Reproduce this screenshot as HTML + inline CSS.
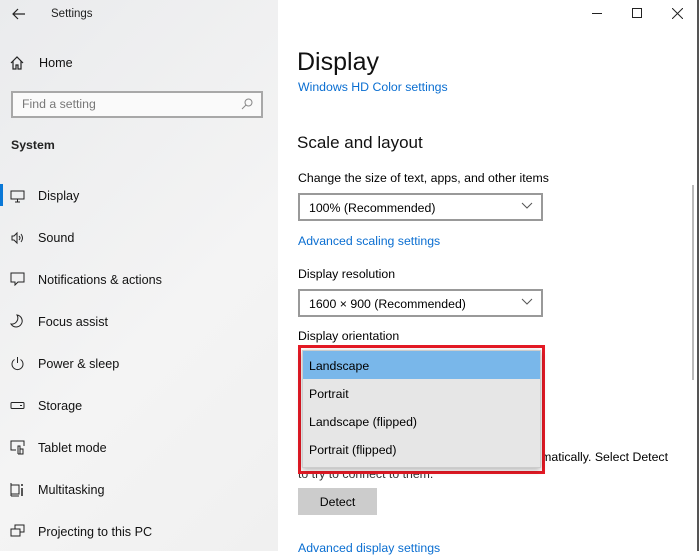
<!DOCTYPE html>
<html><head><meta charset="utf-8"><style>
*{margin:0;padding:0;box-sizing:border-box}
body{width:699px;height:551px;overflow:hidden;font-family:"Liberation Sans",sans-serif;background:#fff;position:relative;color:#000}
.a{position:absolute;white-space:nowrap}
#side{position:absolute;left:0;top:0;width:278px;height:551px;background:linear-gradient(135deg,#eaebed,#f4f4f4 60%,#f0f0f0)}
.nav{font-size:12.6px;color:#111}
.ic{position:absolute;left:10px}
.link{color:#0a6ed1;font-size:12.3px}
.dd{position:absolute;left:298px;width:245px;height:28px;border:2px solid #999;background:#fff;font-size:12.3px;padding:6px 0 0 9px}
.chev{position:absolute;right:8px;top:7px}
</style></head><body>
<div id="side">
<svg class="a" style="left:12px;top:8px" width="14" height="12"><path d="M6 1L1 6L6 11M1 6H13" stroke="#222" fill="none" stroke-width="1.2"/></svg>
<div class="a" style="left:51px;top:8px;font-size:11.5px;color:#222">Settings</div>
<svg class="ic" style="top:56px" width="14" height="14"><path d="M1 7L7 1L13 7M3 5V13H6V9H8V13H11V5" stroke="#222" fill="none" stroke-width="1.2"/></svg>
<div class="a nav" style="left:39px;top:56px">Home</div>
<div class="a" style="left:11px;top:91px;width:252px;height:27px;border:2px solid #a8a8a8;background:#fafafa;font-size:12.3px;color:#777;padding:4px 0 0 9px">Find a setting
<svg style="position:absolute;right:8px;top:5px" width="12" height="12"><circle cx="7.5" cy="4.5" r="3.5" stroke="#888" fill="none"/><path d="M5 7L1 11" stroke="#888"/></svg></div>
<div class="a" style="left:11px;top:138px;font-size:12.3px;font-weight:bold;color:#222">System</div>
<div class="a" style="left:0;top:184px;width:3px;height:22px;background:#0a78d7"></div>
<svg class="ic" style="top:190px" width="16" height="14"><rect x="1" y="1" width="13" height="8" stroke="#222" fill="none"/><path d="M5 12H10M7.5 9V12" stroke="#222"/></svg>
<div class="a nav" style="left:38px;top:189px">Display</div>
<svg class="ic" style="top:231px" width="16" height="14"><path d="M2 5H4L7 2V12L4 9H2Z M9 5Q11 7 9 9 M11 3Q14 7 11 11" stroke="#222" fill="none"/></svg>
<div class="a nav" style="left:38px;top:231px">Sound</div>
<svg class="ic" style="top:272px" width="16" height="14"><path d="M1 1H14V10H8L5 13V10H1Z" stroke="#222" fill="none"/></svg>
<div class="a nav" style="left:38px;top:273px">Notifications &amp; actions</div>
<svg class="ic" style="top:314px" width="16" height="16"><path d="M7 1A6 6 0 1 1 1 10A6 6 0 0 0 7 1Z" stroke="#222" fill="none"/></svg>
<div class="a nav" style="left:38px;top:315px">Focus assist</div>
<svg class="ic" style="top:356px" width="16" height="16"><path d="M4.5 3.5A5.5 5.5 0 1 0 10.5 3.5M7.5 1V7" stroke="#222" fill="none"/></svg>
<div class="a nav" style="left:38px;top:357px">Power &amp; sleep</div>
<svg class="ic" style="top:401px" width="16" height="10"><rect x="1" y="1.5" width="13" height="6" rx="1" stroke="#222" fill="none"/><path d="M10 4.5H12" stroke="#222"/></svg>
<div class="a nav" style="left:38px;top:399px">Storage</div>
<svg class="ic" style="top:440px" width="16" height="16"><path d="M6 10H1V1H14V6" stroke="#222" fill="none"/><path d="M8 14V6H10V14M10 9H13V14H8" stroke="#222" fill="none"/></svg>
<div class="a nav" style="left:38px;top:441px">Tablet mode</div>
<svg class="ic" style="top:482px" width="16" height="16"><path d="M1 1V14M1 3H9V12H1M1 14H9" stroke="#222" fill="none"/><path d="M12 2V4M12 6V14" stroke="#222" stroke-width="1.5"/></svg>
<div class="a nav" style="left:38px;top:483px">Multitasking</div>
<svg class="ic" style="top:524px" width="16" height="16"><path d="M5 5V1H14V8H10M1 5H10V12H1Z" stroke="#222" fill="none"/></svg>
<div class="a nav" style="left:38px;top:525px">Projecting to this PC</div>
</div>
<div class="a" style="left:592px;top:13px;width:10px;height:1px;background:#222"></div>
<div class="a" style="left:632px;top:8px;width:10px;height:10px;border:1px solid #222"></div>
<svg class="a" style="left:672px;top:8px" width="11" height="11"><path d="M0 0L11 11M11 0L0 11" stroke="#222"/></svg>
<div class="a" style="left:692px;top:185px;width:2px;height:195px;background:#bbb"></div>
<div class="a" style="left:697px;top:0;width:2px;height:551px;background:#555"></div>
<div class="a" style="left:297px;top:48px;font-size:25px;color:#111">Display</div>
<div class="a link" style="left:298px;top:80px">Windows HD Color settings</div>
<div class="a" style="left:297px;top:133px;font-size:17px;color:#111">Scale and layout</div>
<div class="a" style="left:298px;top:171px;font-size:12.3px">Change the size of text, apps, and other items</div>
<div class="dd" style="top:193px">100% (Recommended)<svg class="chev" width="12" height="8"><path d="M1 1L6 6L11 1" stroke="#555" fill="none"/></svg></div>
<div class="a link" style="left:298px;top:234px">Advanced scaling settings</div>
<div class="a" style="left:298px;top:267px;font-size:12.3px">Display resolution</div>
<div class="dd" style="top:289px">1600 × 900 (Recommended)<svg class="chev" width="12" height="8"><path d="M1 1L6 6L11 1" stroke="#555" fill="none"/></svg></div>
<div class="a" style="left:298px;top:329px;font-size:12.3px">Display orientation</div>
<div class="a" style="left:298px;top:450px;font-size:12.3px;width:380px;text-align:right;padding-right:10px">matically. Select Detect</div>
<div class="a" style="left:298px;top:467px;font-size:12.3px;color:#333">to try to connect to them.</div>
<div class="a" style="left:298px;top:488px;width:79px;height:27px;background:#ccc;font-size:12.3px;text-align:center;padding-top:7px">Detect</div>
<div class="a link" style="left:298px;top:541px">Advanced display settings</div>
<div class="a" style="left:298px;top:345px;width:247px;height:129px;border:3px solid #e51a25;background:#fff"></div>
<div class="a" style="left:302px;top:350px;width:239px;height:118px;background:#e6e6e6;border:1px solid #ccc;box-shadow:0 2px 6px rgba(0,0,0,.3);font-size:12.3px">
<div style="height:28px;background:#79b7ea;padding:8px 0 0 6px">Landscape</div>
<div style="height:28px;padding:8px 0 0 6px">Portrait</div>
<div style="height:28px;padding:8px 0 0 6px">Landscape (flipped)</div>
<div style="height:28px;padding:8px 0 0 6px">Portrait (flipped)</div>
</div>
</body></html>
